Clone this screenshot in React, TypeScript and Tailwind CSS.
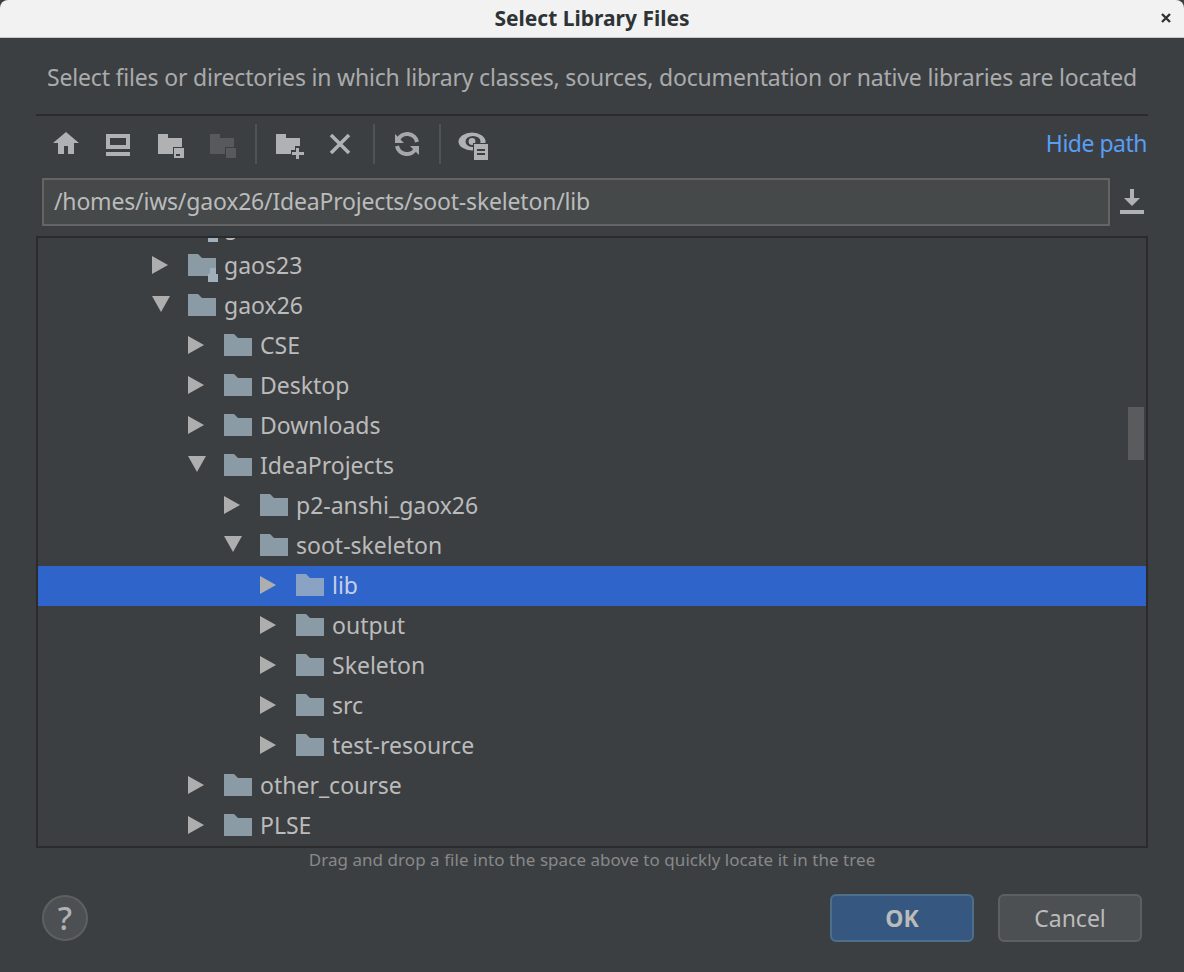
import React from 'react';

const font = { fontFamily: '"Noto Sans", sans-serif' };

type Row = { name: string; depth: number; open?: boolean; selected?: boolean; locked?: boolean };

const rows: Row[] = [
  { name: 'g', depth: 0, locked: true },
  { name: 'gaos23', depth: 0, locked: true },
  { name: 'gaox26', depth: 0, open: true },
  { name: 'CSE', depth: 1 },
  { name: 'Desktop', depth: 1 },
  { name: 'Downloads', depth: 1 },
  { name: 'IdeaProjects', depth: 1, open: true },
  { name: 'p2-anshi_gaox26', depth: 2 },
  { name: 'soot-skeleton', depth: 2, open: true },
  { name: 'lib', depth: 3, selected: true },
  { name: 'output', depth: 3 },
  { name: 'Skeleton', depth: 3 },
  { name: 'src', depth: 3 },
  { name: 'test-resource', depth: 3 },
  { name: 'other_course', depth: 1 },
  { name: 'PLSE', depth: 1 },
];

const Svg = ({ children, className = '' }: { children: React.ReactNode; className?: string }) => (
  <svg width="32" height="32" viewBox="0 0 32 32" className={`shrink-0 ${className}`} shapeRendering="crispEdges">
    {children}
  </svg>
);

const HomeIcon = ({ className }: { className?: string }) => (
  <Svg className={className}>
    <path d="M3 15 16 4l13 11h-5v11h-6v-8h-4v8H8V15z" fill="#afb1b3" shapeRendering="auto" />
  </Svg>
);

const ComputerIcon = ({ className }: { className?: string }) => (
  <Svg className={className}>
    <path d="M4 6h24v15H4zM8 10v7h16v-7zM4 24h24v4H4z" fill="#afb1b3" fillRule="evenodd" />
  </Svg>
);

const FolderBadgeIcon = ({ className }: { className?: string }) => (
  <Svg className={className}>
    <path d="M3 6h10v4h14v16H3z" fill="#afb1b3" />
    <rect x="18" y="19" width="12" height="12" fill="#3c3f41" />
    <rect x="19" y="20" width="10" height="10" fill="#afb1b3" />
    <rect x="21" y="26" width="4" height="2" fill="#3c3f41" />
  </Svg>
);

const FolderOffIcon = ({ className }: { className?: string }) => (
  <Svg className={className}>
    <path d="M3 6h10v4h14v16H3z" fill="#58595a" />
    <rect x="18" y="19" width="12" height="12" fill="#3c3f41" />
    <rect x="19" y="20" width="10" height="10" fill="#58595a" />
  </Svg>
);

const NewFolderIcon = ({ className }: { className?: string }) => (
  <Svg className={className}>
    <path d="M3 6h10v4h14v16H3z" fill="#afb1b3" />
    <path d="M22 18h6v4h4v6h-4v4h-6v-4h-4v-6h4z" fill="#3c3f41" />
    <path d="M24 20h2v4h5v3h-5v4h-3v-4h-4v-3h4v-4z" fill="#afb1b3" />
  </Svg>
);

const CloseIcon = ({ className }: { className?: string }) => (
  <svg width="32" height="32" viewBox="0 0 32 32" className={`shrink-0 ${className}`}>
    <path d="M7 7l18 18M25 7 7 25" stroke="#afb1b3" strokeWidth="3.6" />
  </svg>
);

const RefreshIcon = ({ className }: { className?: string }) => (
  <svg width="32" height="32" viewBox="0 0 32 32" className={`shrink-0 ${className}`}>
    <path d="M7 12A10 10 0 0 1 26 14M25 20A10 10 0 0 1 6 18" stroke="#a5a7a9" strokeWidth="4" fill="none" />
    <path d="M4 6v9h9zM28 27v-9h-9z" fill="#a5a7a9" />
  </svg>
);

const EyeIcon = ({ className }: { className?: string }) => (
  <svg width="32" height="32" viewBox="0 0 32 32" className={`shrink-0 ${className}`}>
    <ellipse cx="15" cy="13.5" rx="13.5" ry="9" fill="#afb1b3" />
    <ellipse cx="16" cy="13.5" rx="7.5" ry="5.5" fill="#3c3f41" />
    <circle cx="15" cy="13.5" r="3.4" fill="#afb1b3" />
    <rect x="16" y="15" width="16" height="17" fill="#3c3f41" />
    <path d="M17 16h14v16H17zM20 21v2h8v-2zM20 25v2h8v-2z" fill="#afb1b3" fillRule="evenodd" shapeRendering="crispEdges" />
  </svg>
);

const ToolSep = () => <div className="w-0.5 h-10 bg-[#505254] shrink-0" />;

const TreeRow = ({ row }: { row: Row }) => {
  const left = 152 - 38 + row.depth * 36;
  return (
    <div
      className={`h-10 flex items-center shrink-0 ${row.selected ? 'bg-[#2f65ca]' : ''}`}
      style={{ paddingLeft: left }}
    >
      <svg width="18" height="20" viewBox="0 0 18 20" className="shrink-0">
        {row.open ? <path d="M0 0h18l-9 16z" fill="#aeaeae" /> : <path d="M0 0l16 9-16 9z" fill="#aeaeae" />}
      </svg>
      <svg width="28" height="22" viewBox="0 0 28 22" className="ml-[18px] mb-0.5 shrink-0 overflow-visible" shapeRendering="crispEdges">
        <path d="M0 0h10l4 4h14v18H0z" fill={row.selected ? '#8aa2c4' : '#8a9ba6'} shapeRendering="auto" />
        {row.locked && <path d="M22 14h6v6h2v8H20v-8h2z" fill="#9fb0bc" />}
      </svg>
      <span className={`ml-2 pb-0.5 text-[23px] leading-none whitespace-pre ${row.selected ? 'text-[#c5d0e6]' : 'text-[#bbbbbb]'}`}>
        {row.name}
      </span>
    </div>
  );
};

export default function App() {
  return (
    <div className="w-[1184px] h-[972px] bg-[#3c3f41] flex flex-col overflow-hidden" style={font}>
      {/* title bar */}
      <div className="h-[38px] shrink-0 relative flex items-center justify-center bg-[#f2f2f2] border-b border-[#c8c8c8] rounded-t-lg">
        <span className="text-[21px] font-bold text-[#2e3436]">Select Library Files</span>
        <span className="absolute right-[13px] top-[13px]">
          <svg width="10" height="10" viewBox="0 0 10 10" className="block">
            <path d="M1 1l8 8M9 1 1 9" stroke="#2e3436" strokeWidth="2.4" />
          </svg>
        </span>
      </div>

      <div className="h-[76px] shrink-0 pt-[3px] flex items-center justify-center text-[23px] tracking-[-0.19px] text-[#a9abad] whitespace-pre">
        Select files or directories in which library classes, sources, documentation or native libraries are located
      </div>

      <div className="mx-9 h-0.5 bg-[#2b2b2b] shrink-0" />

      {/* toolbar */}
      <div className="h-[62px] shrink-0 pl-[50px] pr-[37px] pb-1.5 flex items-center">
        <HomeIcon />
        <ComputerIcon className="ml-5" />
        <FolderBadgeIcon className="ml-[21px]" />
        <FolderOffIcon className="ml-5" />
        <div className="ml-4"><ToolSep /></div>
        <NewFolderIcon className="ml-4" />
        <CloseIcon className="ml-[19px]" />
        <div className="ml-[17px]"><ToolSep /></div>
        <RefreshIcon className="ml-4" />
        <div className="ml-[16px]"><ToolSep /></div>
        <EyeIcon className="ml-4" />
        <span className="ml-auto pb-0.5 text-[23px] tracking-[-0.5px] text-[#589df6]">Hide path</span>
      </div>

      {/* path field */}
      <div className="flex items-center pl-[42px] pr-[37px] shrink-0">
        <div className="w-[1068px] h-12 bg-[#45494a] border-2 border-[#646464] flex items-center pl-2.5 pb-0.5 text-[23px] tracking-[-0.19px] text-[#bbbbbb]">
          /homes/iws/gaox26/IdeaProjects/soot-skeleton/lib
        </div>
        <svg width="24" height="26" viewBox="0 0 24 26" className="ml-[10px] shrink-0">
          <path d="M10 0h4v9h6l-8 8-8-8h6zM0 21h24v4H0z" fill="#afb1b3" />
        </svg>
      </div>

      {/* tree */}
      <div className="relative ml-9 mr-9 mt-2.5 h-[612px] shrink-0 border-2 border-[#2b2b2b] overflow-hidden flex flex-col">
        <div className="-mt-8 flex flex-col">
          {rows.map((row, i) => (
            <TreeRow key={i} row={row} />
          ))}
        </div>
        <div className="absolute right-0.5 top-[169px] w-4 h-[53px] bg-[#595b5d]" />
      </div>

      <div className="h-6 shrink-0 flex items-center justify-center text-[17px] tracking-[0.05px] text-[#87898b]">
        Drag and drop a file into the space above to quickly locate it in the tree
      </div>

      {/* footer */}
      <div className="flex items-center pl-[42px] pr-[42px] mt-[22px] shrink-0">
        <div className="w-[46px] h-[46px] rounded-full bg-[#4c5052] border-2 border-[#5e6060] flex items-center justify-center text-[32px] leading-none font-medium text-[#afb1b3]">
          ?
        </div>
        <button className="ml-auto w-[144px] h-12 rounded-md bg-[#365880] border-2 border-[#4c708c] text-[23px] font-bold text-[#bbbbbb]">
          OK
        </button>
        <button className="ml-6 w-[144px] h-12 rounded-md bg-[#4c5052] border-2 border-[#5e6060] text-[23px] text-[#bbbbbb]">
          Cancel
        </button>
      </div>
    </div>
  );
}
